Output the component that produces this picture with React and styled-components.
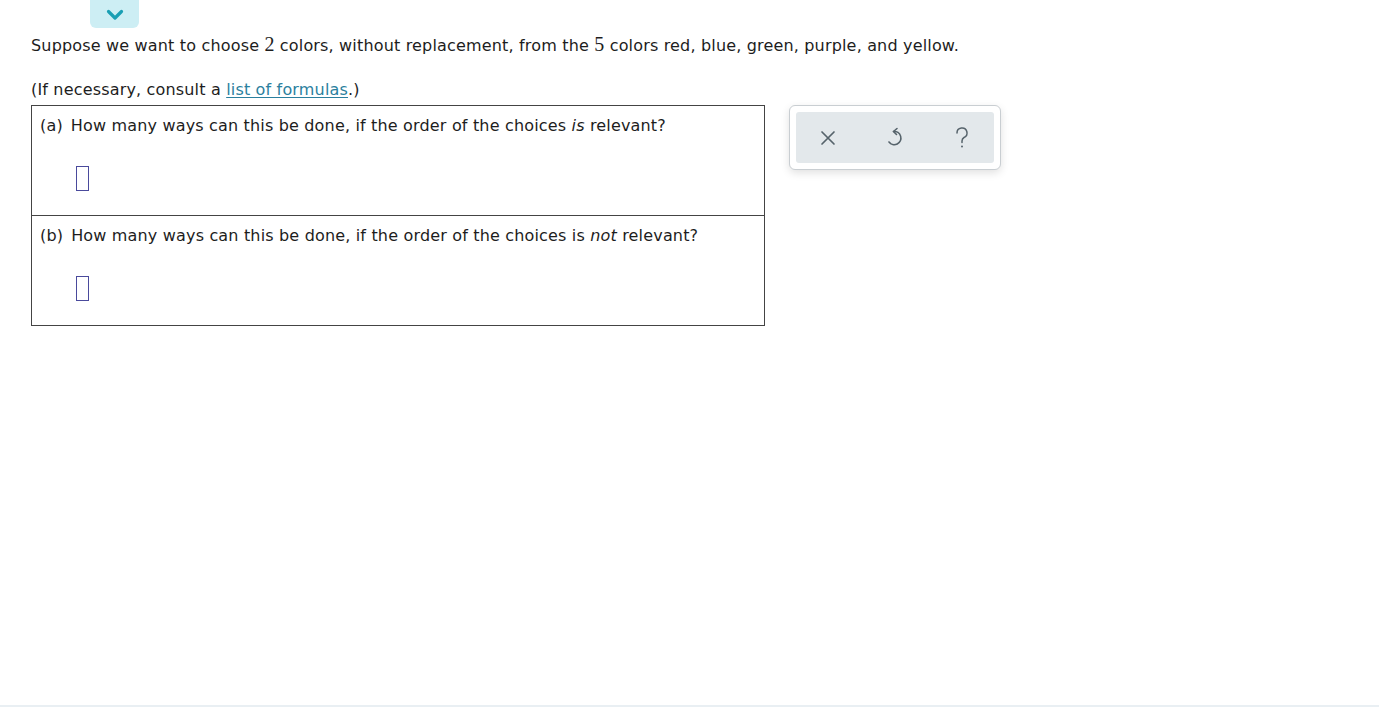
import React from "react";
import styled, { createGlobalStyle } from "styled-components";

const GlobalStyle = createGlobalStyle`
  html, body {
    margin: 0;
    padding: 0;
    background: #fff;
  }
  body {
    font-family: "DejaVu Sans", Verdana, sans-serif;
    color: #1d1d1d;
  }
`;

const Page = styled.div`
  min-height: 100vh;
  box-sizing: border-box;
  display: flex;
  flex-direction: column;
`;

const Content = styled.div`
  flex: 1;
  padding-left: 31px;
`;

const Tab = styled.button`
  display: flex;
  align-items: center;
  justify-content: center;
  width: 49px;
  height: 28px;
  margin-left: 59px;
  padding: 0;
  border: none;
  border-radius: 0 0 6px 6px;
  background: #cdeef4;
  cursor: pointer;
`;

const Para = styled.p`
  margin: ${(p) => p.$top}px 0 0;
  font-size: 16px;
  line-height: 18px;
  letter-spacing: 0.17px;
`;

const Num = styled.span`
  font-family: "Liberation Serif", "Times New Roman", serif;
  font-size: 20px;
`;

const Link = styled.a`
  color: #2b7f9e;
  text-decoration: underline;
  text-underline-offset: 2px;
`;

const Row = styled.div`
  display: flex;
  align-items: flex-start;
  gap: 24px;
  margin-top: 6px;
`;

const Table = styled.div`
  width: 734px;
  border: 1px solid #444;
  border-top: none;
  box-sizing: border-box;
`;

const Part = styled.div`
  height: 110px;
  box-sizing: border-box;
  padding: 11px 8px 0;
  border-top: 1px solid #444;
`;

const Question = styled.div`
  font-size: 16px;
  line-height: 18px;
  letter-spacing: 0.17px;
  display: flex;
  gap: 8px;
`;

const Answer = styled.div`
  width: 13px;
  height: 25px;
  margin: 31px 0 0 36px;
  border: 1.5px solid #4a4a9c;
  box-sizing: border-box;
`;

const Panel = styled.div`
  width: 212px;
  height: 65px;
  box-sizing: border-box;
  padding: 6px;
  border: 1px solid #c9ced2;
  border-radius: 6px;
  background: #fff;
  box-shadow: 0 3px 8px rgba(0, 0, 0, 0.12);
`;

const Tools = styled.div`
  height: 100%;
  border-radius: 3px;
  background: #e3e8eb;
  display: flex;
  align-items: center;
  justify-content: space-between;
  padding: 0 19px;
`;

const Tool = styled.button`
  background: none;
  border: none;
  padding: 0;
  width: 26px;
  height: 26px;
  display: flex;
  align-items: center;
  justify-content: center;
  color: #56636b;
  cursor: pointer;
`;

const Footer = styled.div`
  height: 2px;
  background: #e9eff3;
`;

const Chevron = () => (
  <svg width="20" height="13" viewBox="0 0 20 13">
    <polyline points="3.5,3.5 10,10 16.5,3.5" fill="none" stroke="#1a9fb4" strokeWidth="3.2" strokeLinecap="round" strokeLinejoin="round" />
  </svg>
);

const CloseIcon = () => (
  <svg width="20" height="20" viewBox="0 0 20 20">
    <path d="M4 4 L16 16 M16 4 L4 16" stroke="currentColor" strokeWidth="1.7" strokeLinecap="round" />
  </svg>
);

const UndoIcon = () => (
  <svg width="20" height="24" viewBox="0 0 20 24">
    <path d="M12 2.5 L8.5 5.5 L11.5 8.5" fill="none" stroke="currentColor" strokeWidth="1.6" strokeLinecap="round" strokeLinejoin="round" />
    <path d="M8.5 5.5 A6.6 6.6 0 1 1 4 16" fill="none" stroke="currentColor" strokeWidth="1.6" strokeLinecap="round" />
  </svg>
);

const HelpIcon = () => (
  <svg width="20" height="24" viewBox="0 0 20 24">
    <path d="M5 7 A5 5 0 1 1 12 11.5 C10.5 12.3 10 13.2 10 15 V16.5" fill="none" stroke="currentColor" strokeWidth="1.5" strokeLinecap="round" />
    <circle cx="10" cy="20.5" r="1" fill="currentColor" />
  </svg>
);

export default function App() {
  return (
    <Page>
      <GlobalStyle />
      <Content>
        <Tab aria-label="collapse">
          <Chevron />
        </Tab>
        <Para $top={7}>
          Suppose we want to choose <Num>2</Num> colors, without replacement, from the <Num>5</Num> colors red,
          blue, green, purple, and yellow.
        </Para>
        <Para $top={26}>
          (If necessary, consult a <Link href="#">list of formulas</Link>.)
        </Para>
        <Row>
          <Table>
            <Part>
              <Question>
                <span>(a)</span>
                <span>
                  How many ways can this be done, if the order of the choices <i>is</i> relevant?
                </span>
              </Question>
              <Answer />
            </Part>
            <Part>
              <Question>
                <span>(b)</span>
                <span>
                  How many ways can this be done, if the order of the choices is <i>not</i> relevant?
                </span>
              </Question>
              <Answer />
            </Part>
          </Table>
          <Panel>
            <Tools>
              <Tool aria-label="clear">
                <CloseIcon />
              </Tool>
              <Tool aria-label="undo">
                <UndoIcon />
              </Tool>
              <Tool aria-label="help">
                <HelpIcon />
              </Tool>
            </Tools>
          </Panel>
        </Row>
      </Content>
      <Footer />
    </Page>
  );
}
